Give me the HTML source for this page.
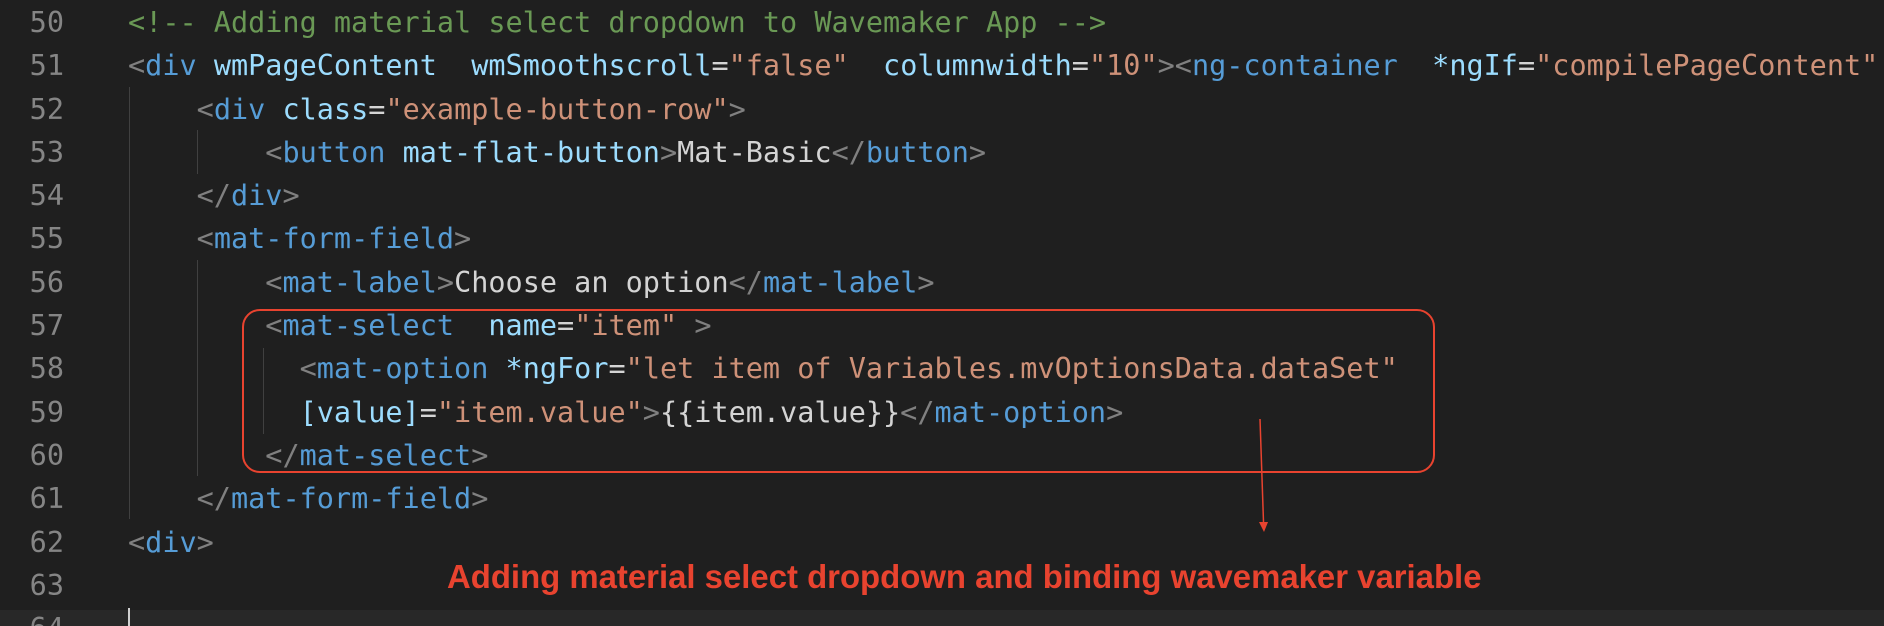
<!DOCTYPE html>
<html><head><meta charset="utf-8"><style>
html,body{margin:0;padding:0;background:#1f1f1f;width:1884px;height:626px;overflow:hidden;position:relative}
.ln{position:absolute;left:0;width:64px;text-align:right;color:#858585;font-family:"DejaVu Sans Mono","Liberation Mono",monospace;font-size:28.5px;line-height:43.3px;white-space:pre}
.code{position:absolute;left:128px;font-family:"DejaVu Sans Mono","Liberation Mono",monospace;font-size:28.5px;line-height:43.3px;white-space:pre;color:#d4d4d4}
.c{color:#6a9955}.p{color:#808080}.t{color:#569cd6}.a{color:#9cdcfe}.s{color:#ce9178}.e{color:#d4d4d4}
.g{position:absolute;width:1px;background:#404040}
</style></head><body>
<div style="position:absolute;left:0;top:610px;width:1884px;height:16px;background:#282828"></div>
<div style="position:absolute;left:128px;top:608px;width:2px;height:18px;background:#d0d0d0"></div>
<div class="g" style="left:129px;top:87px;height:432px"></div>
<div class="g" style="left:197px;top:130px;height:44px"></div>
<div class="g" style="left:197px;top:260px;height:216px"></div>
<div class="g" style="left:263px;top:348px;height:86px"></div>
<div class="ln" style="top:1px">50
51
52
53
54
55
56
57
58
59
60
61
62
63
64</div>
<div class="code" style="top:1px"><span class="c">&lt;!-- Adding material select dropdown to Wavemaker App --&gt;</span>
<span class="p">&lt;</span><span class="t">div</span> <span class="a">wmPageContent</span>  <span class="a">wmSmoothscroll</span><span class="e">=</span><span class="s">"false"</span>  <span class="a">columnwidth</span><span class="e">=</span><span class="s">"10"</span><span class="p">&gt;&lt;</span><span class="t">ng-container</span>  <span class="a">*ngIf</span><span class="e">=</span><span class="s">"compilePageContent"</span>
    <span class="p">&lt;</span><span class="t">div</span> <span class="a">class</span><span class="e">=</span><span class="s">"example-button-row"</span><span class="p">&gt;</span>
        <span class="p">&lt;</span><span class="t">button</span> <span class="a">mat-flat-button</span><span class="p">&gt;</span>Mat-Basic<span class="p">&lt;/</span><span class="t">button</span><span class="p">&gt;</span>
    <span class="p">&lt;/</span><span class="t">div</span><span class="p">&gt;</span>
    <span class="p">&lt;</span><span class="t">mat-form-field</span><span class="p">&gt;</span>
        <span class="p">&lt;</span><span class="t">mat-label</span><span class="p">&gt;</span>Choose an option<span class="p">&lt;/</span><span class="t">mat-label</span><span class="p">&gt;</span>
        <span class="p">&lt;</span><span class="t">mat-select</span>  <span class="a">name</span><span class="e">=</span><span class="s">"item"</span> <span class="p">&gt;</span>
          <span class="p">&lt;</span><span class="t">mat-option</span> <span class="a">*ngFor</span><span class="e">=</span><span class="s">"let item of Variables.mvOptionsData.dataSet"</span>
          <span class="a">[value]</span><span class="e">=</span><span class="s">"item.value"</span><span class="p">&gt;</span>{{item.value}}<span class="p">&lt;/</span><span class="t">mat-option</span><span class="p">&gt;</span>
        <span class="p">&lt;/</span><span class="t">mat-select</span><span class="p">&gt;</span>
    <span class="p">&lt;/</span><span class="t">mat-form-field</span><span class="p">&gt;</span>
<span class="p">&lt;</span><span class="t">div</span><span class="p">&gt;</span></div>
<svg style="position:absolute;left:0;top:0" width="1884" height="626">
<rect x="243" y="310" width="1191" height="162" rx="17" fill="none" stroke="#e8432f" stroke-width="2"/>
<line x1="1260" y1="419" x2="1263.5" y2="522" stroke="#e8432f" stroke-width="1.5"/>
<polygon points="1259,522 1268,522 1264,532" fill="#e8432f"/>
</svg>
<div style="position:absolute;left:447px;top:558px;font-family:'Liberation Sans',Arial,sans-serif;font-weight:bold;font-size:32.9px;line-height:38px;color:#e8432f;white-space:nowrap">Adding material select dropdown and binding wavemaker variable</div>
</body></html>
